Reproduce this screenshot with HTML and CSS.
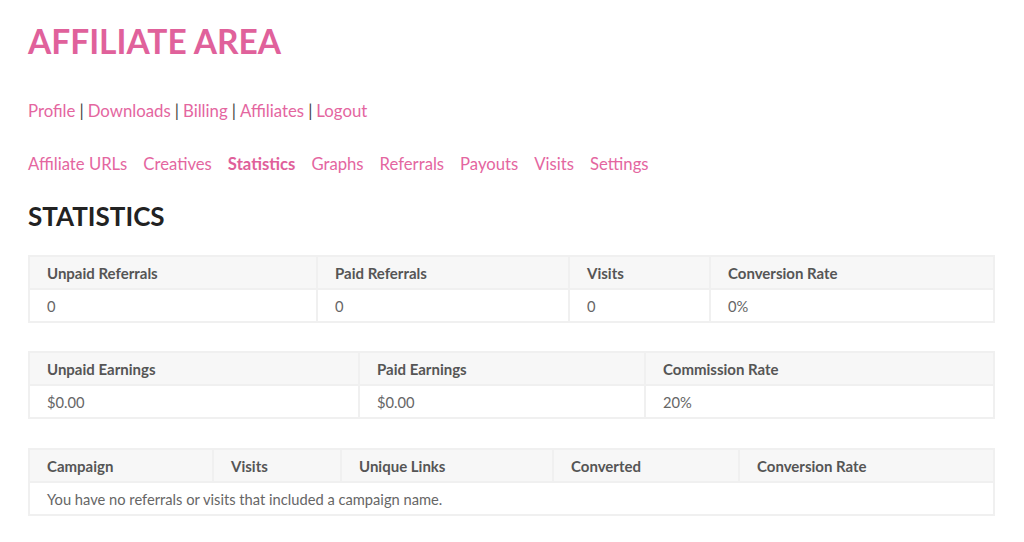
FILE: index.html
```html
<!DOCTYPE html>
<html>
<head>
<meta charset="utf-8">
<link rel="stylesheet" href="styles.css">
</head>
<body>
<main class="page">
  <h1 class="title">AFFILIATE AREA</h1>
  <nav class="account-nav">
    <a href="#">Profile</a><span class="sep">|</span><a href="#">Downloads</a><span class="sep">|</span><a href="#">Billing</a><span class="sep">|</span><a href="#">Affiliates</a><span class="sep">|</span><a href="#">Logout</a>
  </nav>
  <nav class="tabs">
    <a href="#">Affiliate URLs</a>
    <a href="#">Creatives</a>
    <a href="#" class="active">Statistics</a>
    <a href="#">Graphs</a>
    <a href="#">Referrals</a>
    <a href="#">Payouts</a>
    <a href="#">Visits</a>
    <a href="#">Settings</a>
  </nav>
  <h2 class="section-title">STATISTICS</h2>

  <table class="stats t1">
    <colgroup><col class="c1"><col class="c2"><col class="c3"><col></colgroup>
    <thead><tr><th>Unpaid Referrals</th><th>Paid Referrals</th><th>Visits</th><th>Conversion Rate</th></tr></thead>
    <tbody><tr><td>0</td><td>0</td><td>0</td><td>0%</td></tr></tbody>
  </table>

  <table class="stats t2">
    <colgroup><col class="c1"><col class="c2"><col></colgroup>
    <thead><tr><th>Unpaid Earnings</th><th>Paid Earnings</th><th>Commission Rate</th></tr></thead>
    <tbody><tr><td>$0.00</td><td>$0.00</td><td>20%</td></tr></tbody>
  </table>

  <table class="stats t3">
    <colgroup><col class="c1"><col class="c2"><col class="c3"><col class="c4"><col></colgroup>
    <thead><tr><th>Campaign</th><th>Visits</th><th>Unique Links</th><th>Converted</th><th>Conversion Rate</th></tr></thead>
    <tbody><tr><td colspan="5">You have no referrals or visits that included a campaign name.</td></tr></tbody>
  </table>
</main>
</body>
</html>
```

FILE: styles.css
```css
html, body {
  margin: 0;
  padding: 0;
  background: #fff;
}
body {
  font-family: Lato, "Noto Sans", sans-serif;
  color: #666;
}
.page {
  padding: 0 29px 0 28px;
}
.title {
  margin: 0;
  padding-top: 21px;
  font-size: 33.5px;
  line-height: 40px;
  font-weight: 700;
  color: #e0619b;
}
.account-nav {
  margin-top: 39px;
  font-size: 16.8px;
  line-height: 22px;
  display: flex;
  align-items: center;
}
.account-nav a,
.tabs a {
  color: #e4669f;
  text-decoration: none;
}
.sep {
  color: #444;
  margin: 0 4px;
}
.tabs {
  margin-top: 31px;
  font-size: 16.7px;
  line-height: 22px;
  display: flex;
  gap: 16px;
}
.tabs a.active {
  font-weight: 700;
  color: #e0609a;
}
.section-title {
  margin: 26px 0 0;
  font-size: 26px;
  line-height: 30px;
  font-weight: 700;
  color: #222;
}
.stats {
  width: 967px;
  border-collapse: collapse;
  table-layout: fixed;
  font-size: 15px;
  border: 2px solid #f0f0f0;
}
.stats th,
.stats td {
  text-align: left;
  padding: 0 17px;
  height: 31px;
  border: 2px solid #f0f0f0;
}
.stats th {
  background: #f7f7f7;
  color: #555;
  font-weight: 700;
}
.stats td {
  color: #666;
  font-weight: 400;
  font-size: 14.7px;
}
.t1 { margin-top: 24px; }
.t2 { margin-top: 28px; }
.t3 { margin-top: 29px; }
.t1 .c1 { width: 288px; }
.t1 .c2 { width: 252px; }
.t1 .c3 { width: 141px; }
.t2 .c1 { width: 330px; }
.t2 .c2 { width: 286px; }
.t3 .c1 { width: 184px; }
.t3 .c2 { width: 128px; }
.t3 .c3 { width: 212px; }
.t3 .c4 { width: 186px; }
```
